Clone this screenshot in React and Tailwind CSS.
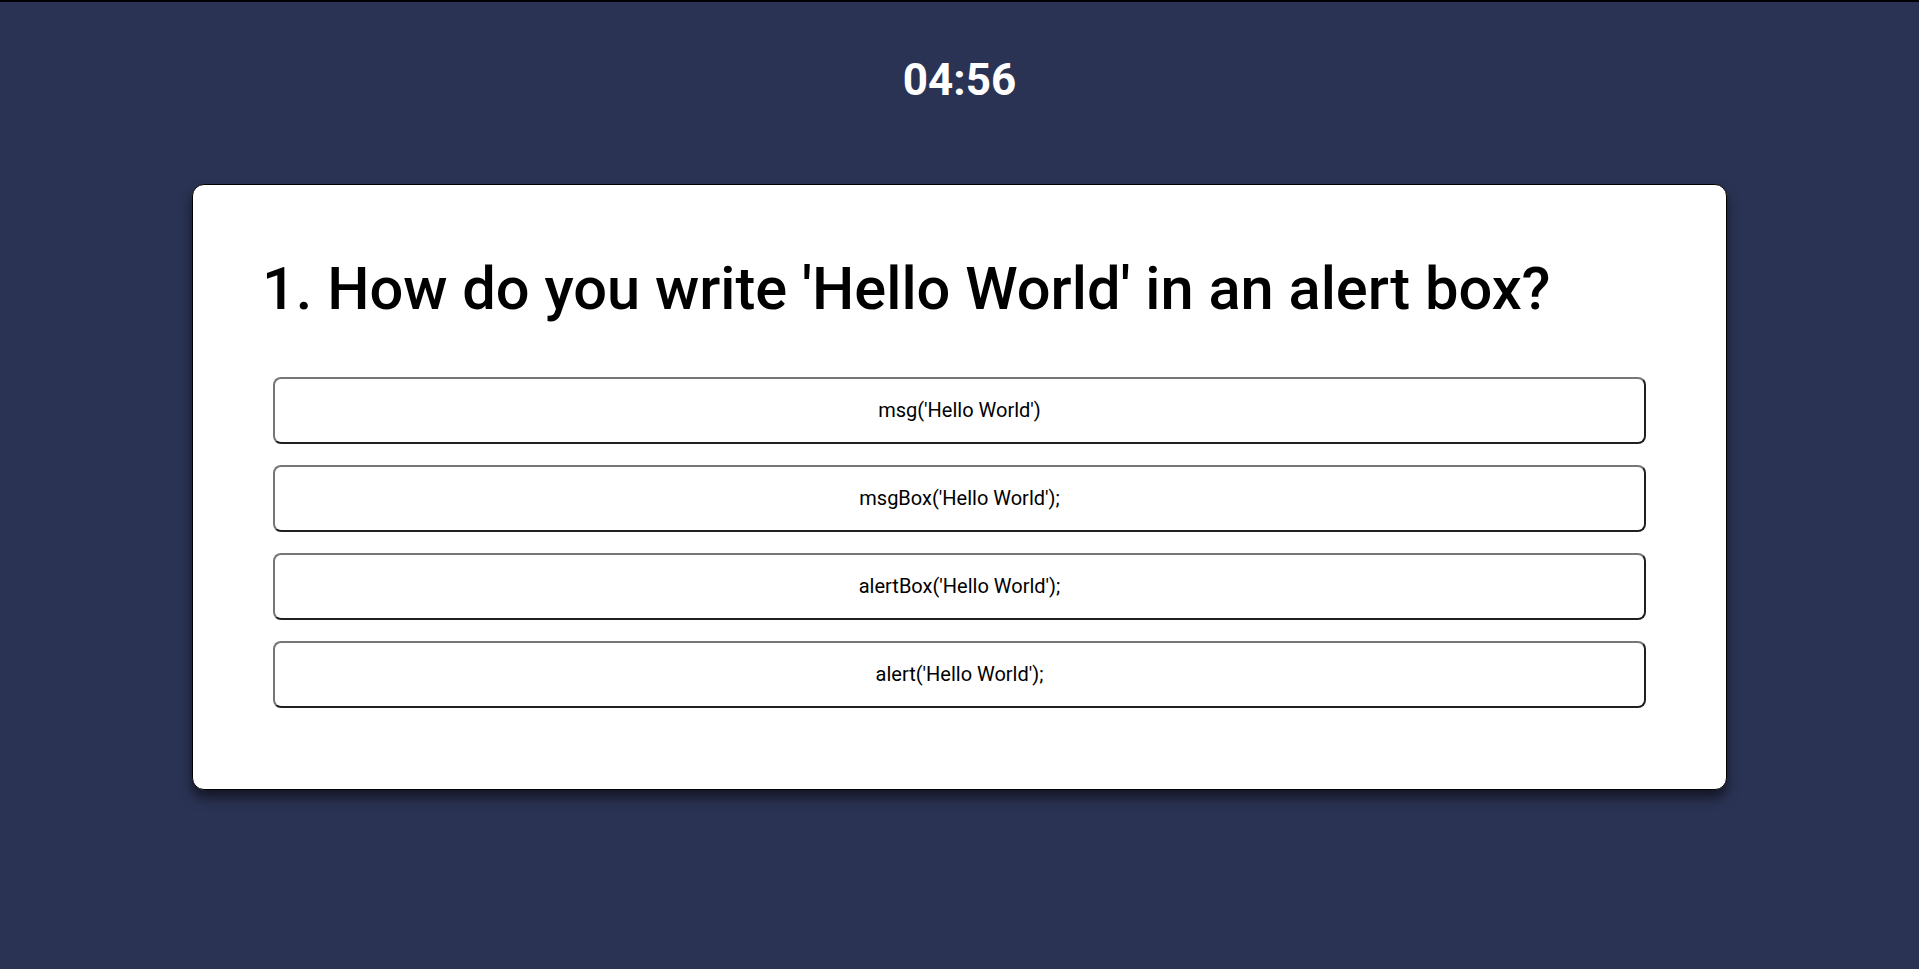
import React, { useState } from 'react';

const options = [
  "msg('Hello World')",
  "msgBox('Hello World');",
  "alertBox('Hello World');",
  "alert('Hello World');",
];

const App = () => {
  const [picked, setPicked] = useState(null);

  return (
    <div className="min-h-screen bg-[#2b3354] border-t-2 border-black font-['Roboto',sans-serif]">
      {/* timer */}
      <div className="pt-[56px] text-center text-white font-bold text-[44px] leading-none">
        04:56
      </div>

      {/* question card */}
      <div className="w-4/5 mx-auto mt-[82px] bg-white border border-black rounded-xl shadow-[0_8px_12px_rgba(0,0,0,0.55)] pt-[75px] pb-[81px]">
        <h1 className="pl-[69px] text-[59.6px] font-medium leading-none text-black">
          1. How do you write 'Hello World' in an alert box?
        </h1>
        <div className="mt-[57px] px-[80px] flex flex-col gap-[21px]">
          {options.map((opt, i) => (
            <button
              key={i}
              onClick={() => setPicked(i)}
              className={`h-[67px] w-full rounded-lg border-2 border-t-[#767676] border-l-[#767676] border-b-[#202020] border-r-[#202020] text-[20px] text-black ${picked === i ? 'bg-gray-100' : 'bg-white'}`}
            >
              {opt}
            </button>
          ))}
        </div>
      </div>
    </div>
  );
};

export default App;
